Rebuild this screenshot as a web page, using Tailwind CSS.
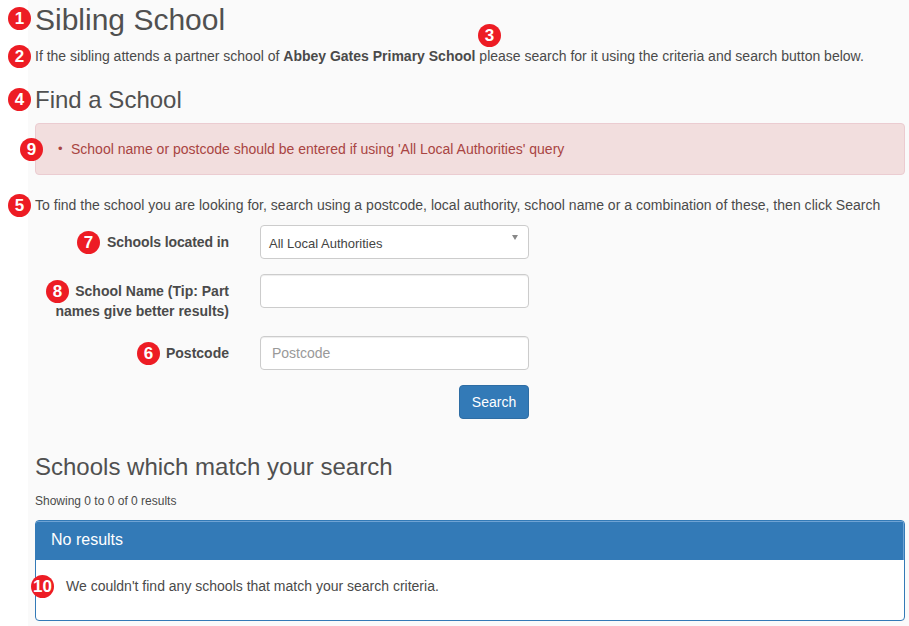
<!DOCTYPE html>
<html lang="en">
<head>
  <meta charset="UTF-8" />
  <meta name="viewport" content="width=device-width, initial-scale=1.0"/>
  <title>Sibling School</title>
  <script src="https://cdn.jsdelivr.net/npm/@tailwindcss/browser@4"></script>
</head>
<body class="bg-white font-['Liberation_Sans',Arial,sans-serif] text-[14px] leading-[20px] text-[#4a4a4a]">
  <div class="relative w-[909px] h-[626px] overflow-hidden">

    <main class="ml-[28px] h-full bg-[#fafafa] pl-[7px] pr-[4px]">
      <h1 class="text-[30px] leading-[33px] pt-[3px] h-[37px] text-[#505050]">Sibling School</h1>
      <p class="mt-[9px]">If the sibling attends a partner school of <strong>Abbey Gates Primary School</strong> please search for it using the criteria and search button below.</p>
      <h2 class="mt-[21px] text-[24px] leading-[26px] text-[#505050]">Find a School</h2>

      <!-- Error -->
      <div class="mt-[10px] h-[52px] flex items-center rounded-[4px] border border-[#ebccd1] bg-[#f2dede] text-[#a94442] pl-[22px]">
        <span class="w-[13px] text-[13px]">•</span>
        <span>School name or postcode should be entered if using 'All Local Authorities' query</span>
      </div>

      <p class="mt-[20px] tracking-[0.02px]">To find the school you are looking for, search using a postcode, local authority, school name or a combination of these, then click Search</p>

      <!-- Search form -->
      <form class="mt-[10px] w-[494px] flex flex-col">
        <div class="flex items-center">
          <label class="w-[194px] text-right font-bold tracking-[-0.1px]">Schools located in</label>
          <div class="ml-[31px] w-[269px] h-[34px] rounded-[4px] border border-[#ccc] bg-white flex justify-between pl-[8px] pr-[10px]">
            <span class="text-[13px] leading-[35px] text-[#444]">All Local Authorities</span>
            <span class="mt-[9px] w-0 h-0 border-x-[3px] border-x-transparent border-t-[5px] border-t-[#888]"></span>
          </div>
        </div>
        <div class="mt-[15px] flex items-start">
          <label class="w-[194px] text-right font-bold pt-[7px]">School Name (Tip: Part names give better results)</label>
          <input type="text" class="ml-[31px] w-[269px] h-[34px] rounded-[4px] border border-[#ccc] bg-white shadow-[inset_0_1px_1px_rgba(0,0,0,0.075)]" />
        </div>
        <div class="mt-[15px] flex items-center">
          <label class="w-[194px] text-right font-bold">Postcode</label>
          <input type="text" placeholder="Postcode" class="ml-[31px] w-[269px] h-[34px] rounded-[4px] border border-[#ccc] bg-white px-[11px] placeholder:text-[#999] shadow-[inset_0_1px_1px_rgba(0,0,0,0.075)]" />
        </div>
        <div class="mt-[15px] flex justify-end">
          <button type="button" class="w-[70px] h-[34px] rounded-[4px] border border-[#2e6da4] bg-[#337ab7] text-white">Search</button>
        </div>
      </form>

      <h2 class="mt-[35px] text-[24px] leading-[26px] text-[#505050]">Schools which match your search</h2>
      <p class="mt-[13px] text-[12px] leading-[17px]">Showing 0 to 0 of 0 results</p>

      <!-- Results -->
      <section class="mt-[10px] h-[101px] rounded-[4px] border border-[#337ab7] bg-white overflow-hidden">
        <div class="h-[39px] border-t border-r border-[#6fa3d4] bg-[#337ab7] text-white text-[16px] leading-[36px] px-[15px]">No results</div>
        <p class="pl-[30px] pt-[16px]">We couldn't find any schools that match your search criteria.</p>
      </section>
    </main>

    <!-- Numbered callouts -->
    <span class="absolute left-[8px] top-[7px] w-[23px] h-[23px] rounded-full bg-[#ed1c24] text-white font-bold text-[17px] leading-[23px] text-center">1</span>
    <span class="absolute left-[8px] top-[45px] w-[23px] h-[23px] rounded-full bg-[#ed1c24] text-white font-bold text-[17px] leading-[23px] text-center">2</span>
    <span class="absolute left-[478px] top-[24px] w-[23px] h-[23px] rounded-full bg-[#ed1c24] text-white font-bold text-[17px] leading-[23px] text-center">3</span>
    <span class="absolute left-[8px] top-[88px] w-[23px] h-[23px] rounded-full bg-[#ed1c24] text-white font-bold text-[17px] leading-[23px] text-center">4</span>
    <span class="absolute left-[20px] top-[138px] w-[23px] h-[23px] rounded-full bg-[#ed1c24] text-white font-bold text-[17px] leading-[23px] text-center">9</span>
    <span class="absolute left-[8px] top-[194px] w-[23px] h-[23px] rounded-full bg-[#ed1c24] text-white font-bold text-[17px] leading-[23px] text-center">5</span>
    <span class="absolute left-[77px] top-[231px] w-[23px] h-[23px] rounded-full bg-[#ed1c24] text-white font-bold text-[17px] leading-[23px] text-center">7</span>
    <span class="absolute left-[46px] top-[280px] w-[23px] h-[23px] rounded-full bg-[#ed1c24] text-white font-bold text-[17px] leading-[23px] text-center">8</span>
    <span class="absolute left-[137px] top-[342px] w-[23px] h-[23px] rounded-full bg-[#ed1c24] text-white font-bold text-[17px] leading-[23px] text-center">6</span>
    <span class="absolute left-[31px] top-[575px] w-[23px] h-[23px] rounded-full bg-[#ed1c24] text-white font-bold text-[17px] leading-[23px] text-center">10</span>
  </div>
</body>
</html>
